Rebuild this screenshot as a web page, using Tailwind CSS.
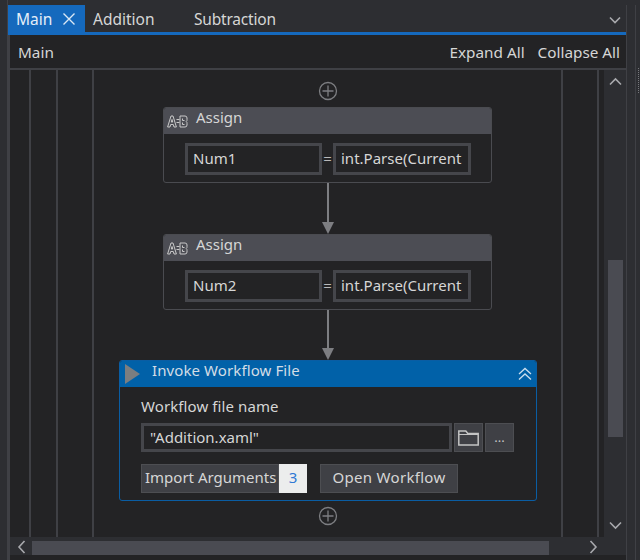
<!DOCTYPE html>
<html>
<head>
<script src="https://cdn.jsdelivr.net/npm/@tailwindcss/browser@4"></script>
</head>
<body class="m-0">
<div class="w-[640px] h-[560px] overflow-hidden bg-[#2d2e32] flex font-['Noto_Sans','Open_Sans',sans-serif] text-[15px] leading-5 text-[#d6d6d6]">
  <div class="w-[8px] shrink-0 border-r border-[#3f4045]"></div>
  <div class="w-[618px] shrink-0 flex flex-col pt-[5px]">
    <div class="h-[27px] flex items-center shrink-0">
      <div class="w-[77px] h-full bg-[#1569bd] text-[#e4eef8] flex items-center pl-[8px] text-[15.5px]">
        <span>Main</span>
        <svg class="ml-[10px]" width="14" height="14" viewBox="0 0 14 14" fill="none" stroke="#dbe8f5" stroke-width="1.4"><path d="M1.5 1.5 12.5 12.5M12.5 1.5 1.5 12.5"/></svg>
      </div>
      <span class="ml-[8px] text-[15.5px] w-[101px]">Addition</span>
      <span class="text-[15.5px] tracking-[-0.2px]">Subtraction</span>
      <svg class="ml-auto mr-[5px] mt-[3px]" width="12" height="8" viewBox="0 0 12 8" fill="none" stroke="#a8a9ad" stroke-width="1.6"><path d="M1 1.5 6 6.5 11 1.5"/></svg>
    </div>
    <div class="h-[3px] shrink-0 bg-[#1569bd]"></div>
    <div class="flex-1 flex flex-col bg-[#232325] border-l-2 border-[#3f4045] min-h-0">
      <div class="h-[35px] shrink-0 border-b-2 border-[#3f4045] flex items-center pl-[8px] pr-[6px] text-[15.3px]">
        <span>Main</span>
        <span class="ml-auto">Expand All</span>
        <span class="ml-[13px]">Collapse All</span>
      </div>
      <div class="flex-1 flex min-h-0">
        <div class="w-[21px] shrink-0 border-r-2 border-[#3f4045]"></div>
        <div class="w-[27px] shrink-0 border-r-2 border-[#3f4045]"></div>
        <div class="w-[36px] shrink-0 border-r-2 border-[#3f4045]"></div>
        <div class="w-[467px] shrink-0 flex flex-col items-center pt-[11px]">
          <svg width="20" height="20" viewBox="0 0 20 20" fill="none" stroke="#7d7e82" stroke-width="1.3"><circle cx="10" cy="10" r="8.5"/><path d="M10 4.5v11M4.5 10h11"/></svg>
          <div class="mt-[6px] w-[329px] h-[76px] shrink-0 rounded-[3px] border border-[#4a4b50] flex flex-col overflow-hidden">
            <div class="h-[26px] shrink-0 bg-[#4c4d54] flex items-center pl-[3px]">
              <svg width="21" height="13" viewBox="0 0 21 13" fill="none" stroke="#c9c9c9" stroke-width="1"><path d="M.6 12 4 1h2l3.4 11H7L6.3 9.500H3.700L3 12ZM4.300 7h1.400L5 4.500Z"/><path d="M9.500 4.500h3M9.500 7.500h3"/><path d="M13 1h5a2 2 0 0 1 2 2v1.500a2 2 0 0 1-.8 2 2.200 2.200 0 0 1 .8 2V10a2 2 0 0 1-2 2h-5ZM15.500 3.500v2h2M15.500 7.500v2h2"/></svg>
              <span class="ml-[8px] pb-[8px] text-[#d6d6d6]">Assign</span>
            </div>
            <div class="flex items-center pl-[21px] pt-[9px]">
              <div class="w-[137px] h-[32px] border-[3px] border-[#45464b] flex items-center pl-[5px] pb-[3px]">Num1</div>
              <span class="w-[11px] text-center text-[#b9b9b9] pb-[3px]">=</span>
              <div class="w-[138px] h-[32px] border-[3px] border-[#45464b] flex items-center pl-[5px] pb-[3px]">int.Parse(Current</div>
            </div>
          </div>
          <div class="w-[2px] h-[39px] bg-[#7d7e82] shrink-0"></div>
          <div class="w-0 h-0 shrink-0 border-x-[6.5px] border-x-transparent border-t-[12px] border-t-[#7d7e82]"></div>
          <div class="w-[329px] h-[76px] shrink-0 rounded-[3px] border border-[#4a4b50] flex flex-col overflow-hidden">
            <div class="h-[26px] shrink-0 bg-[#4c4d54] flex items-center pl-[3px]">
              <svg width="21" height="13" viewBox="0 0 21 13" fill="none" stroke="#c9c9c9" stroke-width="1"><path d="M.6 12 4 1h2l3.4 11H7L6.3 9.500H3.700L3 12ZM4.300 7h1.400L5 4.500Z"/><path d="M9.500 4.500h3M9.500 7.500h3"/><path d="M13 1h5a2 2 0 0 1 2 2v1.500a2 2 0 0 1-.8 2 2.200 2.200 0 0 1 .8 2V10a2 2 0 0 1-2 2h-5ZM15.500 3.500v2h2M15.500 7.500v2h2"/></svg>
              <span class="ml-[8px] pb-[8px] text-[#d6d6d6]">Assign</span>
            </div>
            <div class="flex items-center pl-[21px] pt-[9px]">
              <div class="w-[137px] h-[32px] border-[3px] border-[#45464b] flex items-center pl-[5px] pb-[3px]">Num2</div>
              <span class="w-[11px] text-center text-[#b9b9b9] pb-[3px]">=</span>
              <div class="w-[138px] h-[32px] border-[3px] border-[#45464b] flex items-center pl-[5px] pb-[3px]">int.Parse(Current</div>
            </div>
          </div>
          <div class="w-[2px] h-[38px] bg-[#7d7e82] shrink-0"></div>
          <div class="w-0 h-0 shrink-0 border-x-[6.5px] border-x-transparent border-t-[12px] border-t-[#7d7e82]"></div>
          <div class="ml-[1px] w-[418px] h-[141px] shrink-0 rounded-[3px] border border-[#0a5da3] flex flex-col overflow-hidden">
            <div class="h-[26px] shrink-0 bg-[#0161a8] flex items-center pl-[5px] pr-[4px] text-[#d3dde6]">
              <svg width="15" height="20" viewBox="0 0 15 20"><path d="M0 0 15 10 0 20Z" fill="#7c7e80"/></svg>
              <span class="ml-[12px] pb-[8px] tracking-[0.1px]">Invoke Workflow File</span>
              <svg class="ml-auto" width="14" height="14" viewBox="0 0 14 14" fill="none" stroke="#c9ddee" stroke-width="1.3"><path d="M1 7 7 1.500 13 7M1 12.500 7 7 13 12.500"/></svg>
            </div>
            <div class="pl-[21px] pt-[9px] flex flex-col">
              <span class="h-[20px] flex items-center tracking-[0.1px]">Workflow file name</span>
              <div class="flex mt-[7px] h-[29px]">
                <div class="w-[311px] border-[3px] border-[#45464b] flex items-center pl-[6px] pb-[2px]">"Addition.xaml"</div>
                <div class="ml-[2px] w-[29px] bg-[#3f4045] border border-[#4d4e52] flex items-center justify-center">
                  <svg width="21" height="16" viewBox="0 0 21 16" fill="none" stroke="#c4c4c4" stroke-width="1.5"><path d="M.8 15V1h7l2 2.500h10.400V15Z"/><path d="M1 4.500h19" stroke-width="1"/></svg>
                </div>
                <div class="ml-[2px] w-[29px] bg-[#3f4045] border border-[#4d4e52] flex items-center justify-center text-[13px] text-[#c4c4c4] pb-[1px]">...</div>
              </div>
              <div class="flex mt-[12px] h-[29px]">
                <div class="w-[138px] bg-[#3f4045] border border-[#4d4e52] flex items-center pl-[3px] pb-[3px] whitespace-nowrap">Import Arguments</div>
                <div class="w-[28px] bg-[#eceded] text-[#2f78d4] flex items-center justify-center pb-[3px]">3</div>
                <div class="ml-[13px] w-[138px] bg-[#3f4045] border border-[#4d4e52] flex items-center justify-center pb-[3px] tracking-[0.3px]">Open Workflow</div>
              </div>
            </div>
          </div>
          <svg class="mt-[5px]" width="20" height="20" viewBox="0 0 20 20" fill="none" stroke="#7d7e82" stroke-width="1.3"><circle cx="10" cy="10" r="8.500"/><path d="M10 4.500v11M4.500 10h11"/></svg>
        </div>
        <div class="w-[2px] shrink-0 border-r-2 border-[#3f4045]"></div>
        <div class="w-[36px] shrink-0 border-r-2 border-[#3f4045]"></div>
        <div class="w-[5px] shrink-0"></div>
        <div class="w-[22px] shrink-0 bg-[#2d2e32] flex flex-col items-center">
          <svg class="mt-[7px]" width="13" height="9" viewBox="0 0 13 9" fill="none" stroke="#a8a9ad" stroke-width="1.6"><path d="M1 7.500 6.500 2 12 7.500"/></svg>
          <div class="mt-[174px] w-[15px] h-[177px] bg-[#4a4b52]"></div>
          <svg class="mt-[84px]" width="13" height="9" viewBox="0 0 13 9" fill="none" stroke="#a8a9ad" stroke-width="1.6"><path d="M1 1.500 6.500 7 12 1.500"/></svg>
        </div>
      </div>
      <div class="h-[18px] shrink-0 bg-[#2d2e32] flex items-start mb-[5px]">
        <svg class="ml-[7px] mt-[3px]" width="9" height="14" viewBox="0 0 9 14" fill="none" stroke="#a8a9ad" stroke-width="1.6"><path d="M7.500 1 2 7 7.500 13"/></svg>
        <div class="ml-[6px] mt-[4px] w-[517px] h-[14px] bg-[#4a4b52]"></div>
        <svg class="ml-[40px] mt-[3px]" width="9" height="14" viewBox="0 0 9 14" fill="none" stroke="#a8a9ad" stroke-width="1.6"><path d="M1.500 1 7 7 1.500 13"/></svg>
      </div>
    </div>
  </div>
  <div class="w-[14px] shrink-0 flex pt-[5px]">
    <div class="w-[1px] bg-[#3f4045]"></div>
    <div class="w-[9px] border-r border-[#3f4045]"></div>
    <div class="ml-[2px] mt-[63px] h-[25px] border-r border-dotted border-[#77787c]"></div>
  </div>
</div>
</body>
</html>
